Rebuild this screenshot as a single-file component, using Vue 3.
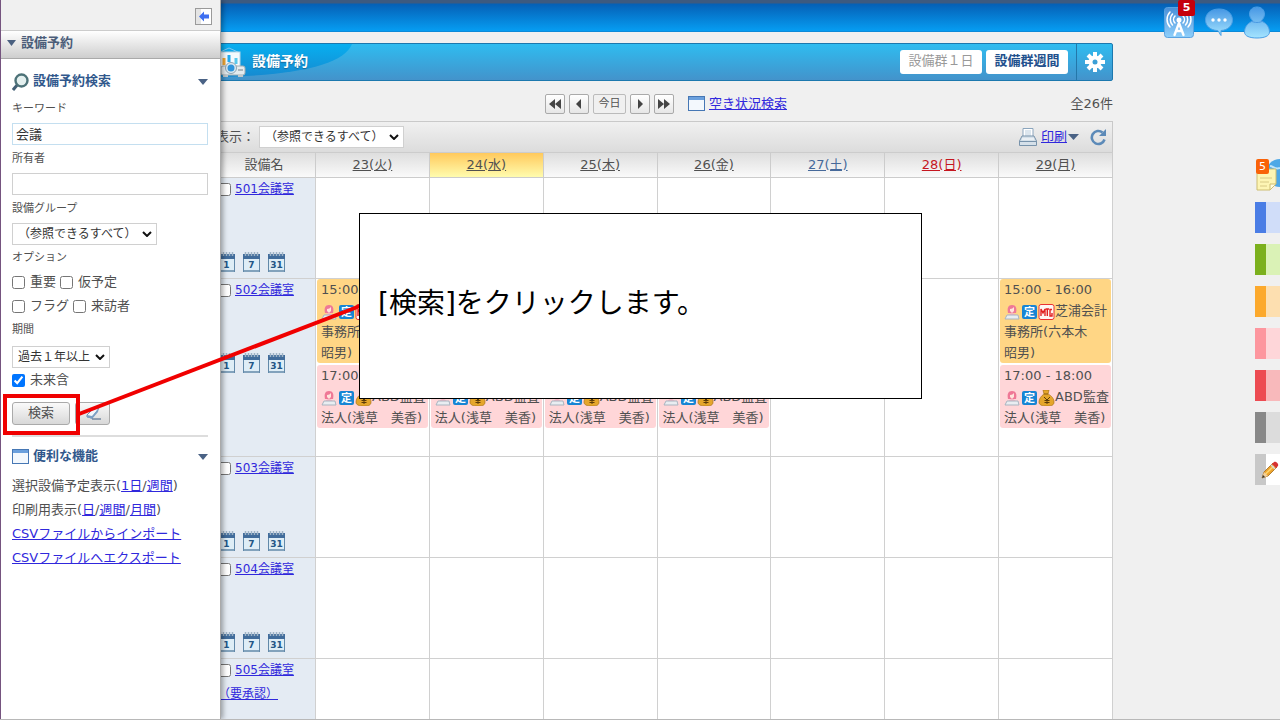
<script setup>
import { ref } from 'vue'

const keyword = ref('会議')
const owner = ref('')
const future = ref(true)

const days = [
  { label: '23(火)', kind: '' },
  { label: '24(水)', kind: 'today' },
  { label: '25(木)', kind: '' },
  { label: '26(金)', kind: '' },
  { label: '27(土)', kind: 'sat' },
  { label: '28(日)', kind: 'sun' },
  { label: '29(月)', kind: '' }
]

const meeting = { time: '15:00 - 16:00', tone: 'amber', badge: 'mtg', text: '芝浦会計事務所(六本木　昭男)' }
const audit = { time: '17:00 - 18:00', tone: 'pink', badge: 'money', text: 'ABD監査法人(浅草　美香)' }
const busyDays = [0, 1, 2, 3, 6]

const rooms = [
  { name: '501会議室', busy: false },
  { name: '502会議室', busy: true },
  { name: '503会議室', busy: false },
  { name: '504会議室', busy: false },
  { name: '505会議室', note: '（要承認）', busy: false }
]

const eventsFor = (room, day) => (room.busy && busyDays.includes(day) ? [meeting, audit] : [])
const spans = ['1', '7', '31']
const tabs = ['blue', 'green', 'orange', 'rose', 'red', 'gray']
</script>

<template>
  <div class="app">
    <header class="topbar">
      <button class="plain" aria-label="お知らせ">
        <svg width="32" height="34" viewBox="0 0 32 34">
          <defs>
            <linearGradient id="tile" x1="0" y1="0" x2="0" y2="1"><stop offset="0" stop-color="#4a8fd8" /><stop offset="1" stop-color="#8fd0fb" /></linearGradient>
            <linearGradient id="glass" x1="0" y1="0" x2="0" y2="1"><stop offset="0" stop-color="#4797e4" /><stop offset="1" stop-color="#a4e4ff" /></linearGradient>
          </defs>
          <rect x="1.5" y="2.500" width="29" height="30" rx="3" fill="url(#tile)" stroke="#5aa2e0" />
          <g fill="none" stroke="#fff" stroke-width="1.500" stroke-linecap="round">
            <path d="M12 18a5 5 0 0 1 0-7M20 18a5 5 0 0 0 0-7M9.500 20a8 8 0 0 1 0-11M22.500 20a8 8 0 0 0 0-11M7 22a11 11 0 0 1 0-15M25 22a11 11 0 0 0 0-15" />
            <path d="M16 18l-4.500 12M16 18l4.500 12M13.500 26h5" stroke-width="2.400" />
          </g>
          <circle cx="16" cy="15" r="2.500" fill="#fff" />
        </svg>
        <span class="count">5</span>
      </button>
      <button class="plain" aria-label="チャット">
        <svg width="30" height="30" viewBox="0 0 30 30">
          <path d="M15 2C7 2 1.500 6.500 1.500 13S7 23 13 23.500c2 0 2 3 4 5v-5c7-.5 11.500-5 11.500-10.500C28.500 6.500 23 2 15 2z" fill="url(#glass)" stroke="#4b9fe5" />
          <circle cx="9" cy="13" r="1.700" fill="#fff" /><circle cx="15" cy="13" r="1.700" fill="#fff" /><circle cx="21" cy="13" r="1.700" fill="#fff" />
        </svg>
      </button>
      <button class="plain" aria-label="ユーザー">
        <svg width="28" height="34" viewBox="0 0 28 34">
          <path d="M14 2c-4.500 0-7.500 3-7.500 7 0 3 1.500 5 3.500 7-5 1.500-8.500 6-8.500 11 0 4 5 6 12.500 6s12.500-2 12.500-6c0-5-3.500-9.500-8.500-11 2-2 3.500-4 3.500-7 0-4-3-7-7.500-7z" fill="url(#glass)" stroke="#4b9fe5" />
          <path d="M8 16c4 2 8 2 12 0" fill="none" stroke="#4a9ae3" />
        </svg>
      </button>
    </header>

    <main class="main">
      <div class="titlebar">
        <svg class="swoosh" width="140" height="36" viewBox="0 0 140 36">
          <defs><linearGradient id="sw" x1="0" y1="0" x2="0" y2="1"><stop offset="0" stop-color="#08aff0" /><stop offset="1" stop-color="#168ad0" /></linearGradient></defs>
          <path d="M0 0H138C130 20 85 32 0 33z" fill="url(#sw)" />
        </svg>
        <div class="title">
          <svg width="32" height="32" viewBox="0 0 32 32">
            <path d="M4 7l11-5 11 5" fill="none" stroke="#7ec8f0" />
            <rect x="4" y="6" width="22" height="17" fill="#f4fafd" stroke="#b7d4e4" />
            <path d="M10 12v7" stroke="#f4a933" stroke-width="3" /><path d="M15 9v7" stroke="#20a9ed" stroke-width="3" /><path d="M22 12v6" stroke="#59c8ec" stroke-width="3" />
            <rect x="7" y="20" width="24" height="9" rx="2" fill="#e5ebee" stroke="#9eabb2" />
            <circle cx="17" cy="22" r="5.500" fill="#dceaf2" stroke="#8fa5b2" /><circle cx="17" cy="22" r="3.500" fill="#2e95dc" />
            <path d="M24 24h5" stroke="#aab4ba" stroke-width="2" /><path d="M9 30h5M24 30h5" stroke="#c1c7ca" stroke-width="2" />
          </svg>
          <h1>設備予約</h1>
        </div>
        <button class="view" disabled>設備群１日</button>
        <button class="view on">設備群週間</button>
        <button class="gear plain" aria-label="設定">
          <svg width="22" height="22" viewBox="-11 -11 22 22">
            <g stroke="#fff" stroke-width="4"><path d="M0-10V10M-10 0H10M-7-7L7 7M-7 7L7-7" /></g>
            <circle r="6.500" fill="#fff" /><circle r="2.500" fill="#3a9fd6" />
          </svg>
        </button>
      </div>

      <div class="nav">
        <span></span>
        <div class="pager">
          <button aria-label="前週"><svg width="12" height="10"><path d="M6 0v10L0 5zM12 0v10L6 5z" /></svg></button>
          <button aria-label="前日"><svg width="12" height="10"><path d="M8 0v10L3 5z" /></svg></button>
          <button class="now">今日</button>
          <button aria-label="翌日"><svg width="12" height="10"><path d="M4 0v10l5-5z" /></svg></button>
          <button aria-label="翌週"><svg width="12" height="10"><path d="M0 0v10l6-5zM6 0v10l6-5z" /></svg></button>
          <svg class="win" width="17" height="16" viewBox="0 0 17 16"><rect x=".5" y=".5" width="16" height="14" fill="#f3f8fd" stroke="#4677b4" /><path d="M1 1h15v3H1z" fill="#6ba0dd" /></svg>
          <a href="#">空き状況検索</a>
        </div>
        <span class="total">全26件</span>
      </div>

      <div class="filter">
        <label for="show">表示：</label>
        <select id="show" class="wide"><option>（参照できるすべて）</option></select>
        <div class="tools">
          <svg width="20" height="20" viewBox="0 0 20 20"><path d="M5 10V1.500h10V10" fill="#fff" stroke="#8ba5bd" /><path d="M7 4h6M7 6h6M7 8h6" stroke="#b9cddd" /><path d="M4 9h12l2.500 5v4.500h-17V14z" fill="#d5e0e9" stroke="#7893ab" /><path d="M2 14.500h16" stroke="#7893ab" /><path d="M4 12h12" stroke="#fff" /></svg>
          <a href="#">印刷</a>
          <svg width="11" height="6"><path d="M0 0h11L5.500 6z" fill="#4a6285" /></svg>
          <button class="plain reload" aria-label="更新"><svg width="18" height="18" viewBox="0 0 18 18"><path d="M15.500 11.500A6.500 6.500 0 1 1 13.500 4.500" fill="none" stroke="#5c8ab8" stroke-width="2.600" /><path d="M17 1v7h-7z" fill="#5c8ab8" /></svg></button>
        </div>
      </div>

      <table class="grid">
        <thead>
          <tr>
            <th class="first">設備名</th>
            <th v-for="d in days" :key="d.label" :class="d.kind"><a href="#">{{ d.label }}</a></th>
          </tr>
        </thead>
        <tbody>
          <tr v-for="r in rooms" :key="r.name">
            <td class="room">
              <div class="name"><input type="checkbox" :aria-label="r.name" /><a href="#">{{ r.name }}</a></div>
              <a v-if="r.note" href="#" class="note">{{ r.note }}</a>
              <div v-else class="cals">
                <a v-for="s in spans" :key="s" href="#" :aria-label="s + '日表示'">
                  <svg width="17" height="21" viewBox="0 0 17 21">
                    <rect x=".5" y="3.500" width="16" height="17" fill="#deedf6" stroke="#6289a9" />
                    <path d="M0 3h17v5H0z" fill="#416c9b" /><path d="M2.500 1v4M5.500 1v4M8.500 1v4M11.500 1v4M14.500 1v4" stroke="#9eb3c5" stroke-width="1.500" />
                    <path d="M1 20h15" stroke="#82a2bc" stroke-width="2" />
                    <text x="8.500" y="17" text-anchor="middle" font-size="9" font-weight="bold" fill="#235685">{{ s }}</text>
                  </svg>
                </a>
              </div>
            </td>
            <td v-for="(d, i) in days" :key="i">
              <div v-for="e in eventsFor(r, i)" :key="e.time" class="event" :class="e.tone">
                <div>{{ e.time }}</div>
                <svg class="ico" width="17" height="16" viewBox="0 0 17 16"><path d="M4 9c-1-5 0-8 4-8s5 3 4 8z" fill="#ef7896" /><path d="M6 5c2 0 3-1 4-2v4l-2 2-2-2z" fill="#ffe4db" /><path d="M4 13c0-3 2-4 4-4s4 1 4 4z" fill="#f7b2c2" /><path d="M3 11h11l1 4H1z" fill="#e9edf1" stroke="#a9b4c0" /></svg><svg class="ico" width="17" height="16" viewBox="0 0 17 16"><rect x="1" y="1" width="15" height="14" rx="2" fill="#1785d4" /><text x="8.500" y="12" text-anchor="middle" font-size="11" font-weight="bold" fill="#fff">定</text></svg><svg v-if="e.badge === 'mtg'" class="ico" width="17" height="16" viewBox="0 0 17 16"><rect x="1" y=".5" width="15" height="15" rx="2" fill="#fff5f2" stroke="#ea3131" /><path d="M3 12V5l2 4 2-4v7M7.500 5H11M9.300 5v7M14 5.500h-2V12h2V9" fill="none" stroke="#e12020" stroke-width="1.400" /></svg><svg v-else class="ico" width="17" height="16" viewBox="0 0 17 16"><path d="M5 0h6l-1 4c4 2 6 5 6 8 0 3-2 4-7 4s-8-1-8-4c0-3 2-6 5-8z" fill="#e5a62b" stroke="#a97316" stroke-width=".7" /><path d="M6 4h4" stroke="#855711" /><path d="M6 7l3 3 3-3M9 10v4M6.500 10.500h5M6.500 12.500h5" fill="none" stroke="#5c3b08" /></svg>{{ e.text }}
              </div>
            </td>
          </tr>
        </tbody>
      </table>
    </main>

    <aside class="rail">
      <button class="plain sticky" aria-label="付箋">
        <svg width="25" height="34" viewBox="0 0 25 34">
          <circle cx="25" cy="15" r="14" fill="#4ea8e6" /><path d="M15 8c3 0 5 4 10 2" stroke="#bfe4fa" stroke-width="2" fill="none" />
          <path d="M2 11h19v15l-6 6H2z" fill="#fdf5b4" stroke="#cdbd72" /><path d="M15 32v-6h6z" fill="#fffce0" stroke="#cdbd72" /><path d="M5 20h12M5 24h9M5 28h7" stroke="#d8ca85" />
        </svg>
        <span class="mini">5</span>
      </button>
      <button v-for="t in tabs" :key="t" class="tab" :class="t" :aria-label="t"></button>
      <button class="tab pen" aria-label="編集">
        <svg width="18" height="20" viewBox="0 0 18 20"><path d="M1 18l2-6L12 3l4 4-9 9z" fill="#eda42d" stroke="#a2691c" stroke-width=".8" /><path d="M4.500 14L14 5" stroke="#ffd66c" stroke-width="1.500" /><path d="M11 4l4 4 2-2c1-2-2-5-4-4z" fill="#d63232" /><path d="M10 5l4 4" stroke="#d5dadd" stroke-width="1.500" /><path d="M1 18l2-6 4 4z" fill="#f2cf9b" /><path d="M1 18l1-3 2 2z" fill="#333" /></svg>
      </button>
    </aside>

    <aside class="drawer">
      <div class="drawer-top">
        <button class="plain" aria-label="閉じる"><svg width="17" height="17" viewBox="0 0 17 17"><rect x=".5" y=".5" width="16" height="16" fill="#fff" stroke="#9a9a9a" /><path d="M1 1h5v15H1z" fill="#e4e4e4" /><path d="M4 8.500l5-5v3h5v4H9v3z" fill="#3e6ff0" /></svg></button>
      </div>
      <div class="drawer-head">
        <svg width="9" height="6"><path d="M0 0h9L4.500 6z" fill="#4a6080" /></svg>
        <h2>設備予約</h2>
      </div>
      <section class="search">
        <div class="sec">
          <svg width="17" height="18" viewBox="0 0 17 18"><path d="M6 11l-5 6" stroke="#435f75" stroke-width="3" /><circle cx="9.500" cy="7.500" r="6" fill="#e4f0ef" stroke="#4d7278" stroke-width="2.400" /></svg>
          <h3>設備予約検索</h3>
          <svg width="10" height="6"><path d="M0 0h10L5 6z" fill="#4a6285" /></svg>
        </div>
        <label class="lab" for="kw">キーワード</label>
        <input id="kw" v-model="keyword" class="text active" type="text" />
        <label class="lab" for="ow">所有者</label>
        <input id="ow" v-model="owner" class="text" type="text" />
        <label class="lab" for="grp">設備グループ</label>
        <select id="grp" class="wide"><option>（参照できるすべて）</option></select>
        <div class="lab opt">オプション</div>
        <div class="checks"><label><input type="checkbox" />重要</label><label><input type="checkbox" />仮予定</label></div>
        <div class="checks"><label><input type="checkbox" />フラグ</label><label><input type="checkbox" />来訪者</label></div>
        <label class="lab term" for="term">期間</label>
        <select id="term" class="short"><option>過去１年以上</option></select>
        <div class="checks"><label><input v-model="future" type="checkbox" />未来含</label></div>
        <div class="buttons">
          <button class="btn go">検索</button>
          <button class="btn" aria-label="クリア"><svg width="16" height="14" viewBox="0 0 16 14"><path d="M2 9l8-8 4 1-7 10-5-1z" fill="#f4f8fc" stroke="#6c8fb4" /><path d="M2 9l5 1 7-8-1 4-6 7-5-2z" fill="#7da0c4" /><path d="M7 13h9" stroke="#3e5c80" /></svg></button>
        </div>
      </section>
      <section class="handy">
        <div class="sec">
          <svg width="17" height="16" viewBox="0 0 17 16"><rect x=".5" y=".5" width="16" height="14" fill="#f3f8fd" stroke="#4677b4" /><path d="M1 1h15v3H1z" fill="#6ba0dd" /></svg>
          <h3>便利な機能</h3>
          <svg width="10" height="6"><path d="M0 0h10L5 6z" fill="#4a6285" /></svg>
        </div>
        <p>選択設備予定表示(<a href="#">1日</a>/<a href="#">週間</a>)</p>
        <p>印刷用表示(<a href="#">日</a>/<a href="#">週間</a>/<a href="#">月間</a>)</p>
        <p><a href="#">CSVファイルからインポート</a></p>
        <p><a href="#">CSVファイルへエクスポート</a></p>
      </section>
    </aside>

    <svg class="marks" width="400" height="450" viewBox="0 0 400 450">
      <path d="M79 414L360 306" stroke="#f00000" stroke-width="4" />
      <rect x="5" y="396" width="73" height="37" fill="none" stroke="#f00000" stroke-width="4" />
    </svg>
    <div class="callout">[検索]をクリックします。</div>
  </div>
</template>

<style>
body {
  margin: 0;
  background: #f0f0f0;
}
</style>

<style scoped>
.app {
  position: relative;
  height: 100vh;
  overflow: hidden;
  box-sizing: border-box;
  border-bottom: 1px solid #b8b8b8;
  font: 13px/20px "DejaVu Sans", "Noto Sans CJK JP", sans-serif;
  color: #505050;
  background: #f0f0f0;
}
.app * { box-sizing: border-box; }
svg { flex: none; display: block; }
a { color: #3028dc; }
button, input, select { font: inherit; color: inherit; margin: 0; }
h1, h2, h3, p { margin: 0; }
.plain { border: 0; padding: 0; background: none; }

.topbar {
  height: 32px;
  display: flex;
  justify-content: flex-end;
  align-items: flex-start;
  gap: 9px;
  padding: 5px 9px 0 0;
  background: linear-gradient(#3d5a80 0, #3d5a80 3px, #0560b6 4px, #069df2 31px, #1277bf);
}
.topbar .plain { position: relative; }
.topbar .plain:nth-child(2) { padding-top: 2px; }
.count {
  position: absolute;
  top: -5px;
  right: 0;
  width: 17px;
  border-radius: 2px;
  background: #c5000c;
  color: #fff;
  font-size: 11px;
  font-weight: bold;
  line-height: 16px;
}

.main { margin: 11px 167px 0 213px; }
.titlebar {
  position: relative;
  height: 38px;
  display: flex;
  align-items: center;
  gap: 4px;
  border: 1px solid #1c78ae;
  border-radius: 2px;
  background: linear-gradient(#2fbcf0, #4393cb);
}
.swoosh { position: absolute; left: 0; top: 0; }
.title { position: relative; flex: 1; display: flex; align-items: center; gap: 6px; }
h1 { font-size: 14px; color: #fff; text-shadow: 0 1px 1px #16689c; line-height: 34px; padding-bottom: 2px; }
.view {
  width: 82px;
  height: 24px;
  padding: 0 0 3px;
  border: 0;
  border-radius: 3px;
  background: #fff;
  color: #999;
  line-height: 20px;
}
.view.on { color: #22508d; font-weight: bold; }
.gear { width: 36px; height: 36px; margin-left: 4px; border-left: 1px solid #2477a9; display: flex; align-items: center; justify-content: center; }

.nav { height: 40px; display: grid; grid-template-columns: 1fr auto 1fr; align-items: center; padding-top: 5px; }
.pager { display: flex; align-items: center; gap: 4px; margin-left: 6px; }
.pager button {
  width: 20px;
  height: 20px;
  padding: 0;
  display: flex;
  align-items: center;
  justify-content: center;
  border: 1px solid #aaa;
  border-radius: 2px;
  background: linear-gradient(#fff, #e6e6e6);
}
.pager button path { fill: #444; }
.pager .now { width: 33px; font-size: 11px; border-color: #bbb; background: #f0f0f0; }
.win { margin-left: 10px; }
.total { text-align: right; }

.filter {
  height: 31px;
  display: flex;
  align-items: center;
  padding: 0 5px 0 3px;
  border: solid #c9c9c9;
  border-width: 1px 1px 0 0;
  background: linear-gradient(#f0f0f0, #dcdcdc);
}
.filter label { width: 43px; white-space: nowrap; }
.tools { margin-left: auto; display: flex; align-items: center; gap: 1px; }
.tools a { margin-left: 2px; }
.reload { margin-left: 9px; }

select {
  appearance: none;
  height: 22px;
  padding: 0 16px 0 5px;
  border: 1px solid #d0d0d0;
  border-radius: 0;
  color: #333;
  font-size: 12px;
  line-height: 20px;
  background: #fff url("data:image/svg+xml,%3Csvg xmlns='http://www.w3.org/2000/svg' width='10' height='6'%3E%3Cpath d='M1 1l4 4 4-4' fill='none' stroke='%23111' stroke-width='2'/%3E%3C/svg%3E") no-repeat right 4px center;
}
.wide { width: 145px; }
.short { width: 98px; }

.grid { width: 100%; table-layout: fixed; border-spacing: 0; background: #fff; }
th {
  height: 26px;
  padding: 0;
  font-weight: normal;
  line-height: 24px;
  border: solid #ccc;
  border-width: 1px 1px 1px 0;
  background: linear-gradient(#dedede, #fafafa);
}
th a { color: inherit; }
.first { width: 103px; }
.today { background: linear-gradient(#ffc95c, #fffcae); }
.sat { color: #46699a; }
.sun { color: #c5161f; }
td { height: 101px; padding: 0 1px; vertical-align: top; border: solid #d0d0d0; border-width: 0 1px 1px 0; }
.room { padding: 1px 0 0 5px; background: #e4ebf3; font-size: 12px; }
.name { display: flex; align-items: center; gap: 4px; height: 20px; }
input[type="checkbox"] { width: 13px; height: 13px; flex: none; }
.note { display: block; line-height: 28px; white-space: nowrap; }
.cals { display: flex; gap: 8px; padding-top: 52px; }
.event { padding-left: 4px; border-radius: 3px; line-height: 21px; margin-bottom: 2px; }
.event:last-child { margin-bottom: 28px; }
.amber { background: #ffd685; }
.pink { background: #ffd6d8; }
.ico { display: inline-block; vertical-align: middle; }

.rail { position: absolute; right: 0; top: 158px; width: 25px; display: grid; gap: 10px; }
.sticky { position: relative; height: 34px; }
.mini { position: absolute; left: 1px; top: 1px; width: 13px; background: #f96208; color: #fff; font-size: 11px; line-height: 15px; border-radius: 2px; }
.tab { height: 31px; padding: 0; margin-bottom: 1px; border: 0 solid; border-left-width: 11px; }
.blue { border-color: #4a7de5; background: #d0ddf9; }
.green { border-color: #7bb01d; background: #daf2b6; }
.orange { border-color: #fca92c; background: #fddfb0; }
.rose { border-color: #fd969e; background: #fed6d9; }
.red { border-color: #ed4b52; background: #f8b9bb; }
.gray { border-color: #888; background: #dcdcdc; }
.pen { border-color: #c8c8c8; background: #fff; }
.pen svg { margin-left: -5px; }

.drawer {
  position: absolute;
  top: 0;
  bottom: 0;
  left: 0;
  width: 221px;
  border-left: 1px solid #75547f;
  border-right: 1px solid #aaa;
  background: #fff;
  box-shadow: 2px 0 5px rgba(0, 0, 0, .35);
}
.drawer-top { height: 31px; padding: 8px 8px 0 0; display: flex; justify-content: flex-end; align-items: flex-start; background: #f0f0f0; border-bottom: 1px solid #ccc; }
.drawer-head { height: 28px; display: flex; align-items: center; gap: 5px; padding: 0 0 3px 6px; background: linear-gradient(#fff, #cecece); border-bottom: 1px solid #aaa; }
h2 { font-size: 13px; color: #4b5d79; }
.search { margin: 0 12px 0 11px; padding-bottom: 10px; border-bottom: 2px solid #ddd; }
.sec { display: flex; align-items: center; gap: 4px; height: 36px; }
.search .sec { padding-top: 9px; }
.sec h3 { flex: 1; font-size: 13px; color: #31588c; padding-bottom: 2px; }
.search > input, .search > select { display: block; }
.lab { display: block; font-size: 11px; line-height: 28px; }
.text { width: 100%; height: 22px; padding: 0 3px 2px; border: 1px solid #d0d0d0; color: #333; }
.active { border-color: #c4dff0; }
.opt { line-height: 25px; }
.term { line-height: 24px; padding-bottom: 4px; }
.checks { display: flex; gap: 4px; height: 24px; }
.checks label { display: flex; align-items: center; gap: 5px; }
.buttons { display: flex; gap: 5px; margin-top: 10px; }
.btn {
  width: 35px;
  height: 23px;
  padding: 0 0 2px;
  display: flex;
  align-items: center;
  justify-content: center;
  border: 1px solid #aaa;
  border-radius: 3px;
  background: linear-gradient(#fafafa, #d8d8d8);
}
.go { width: 58px; }
.handy { margin: 2px 12px 0 11px; }
.handy .sec { height: 35px; }
.handy p { line-height: 24px; white-space: nowrap; }

.marks { position: absolute; left: 0; top: 0; pointer-events: none; }
.callout {
  position: absolute;
  left: 359px;
  top: 213px;
  width: 563px;
  height: 186px;
  padding: 0 18px 4px;
  display: flex;
  align-items: center;
  border: 1px solid #000;
  background: #fff;
  color: #000;
  font-size: 28px;
}
</style>
